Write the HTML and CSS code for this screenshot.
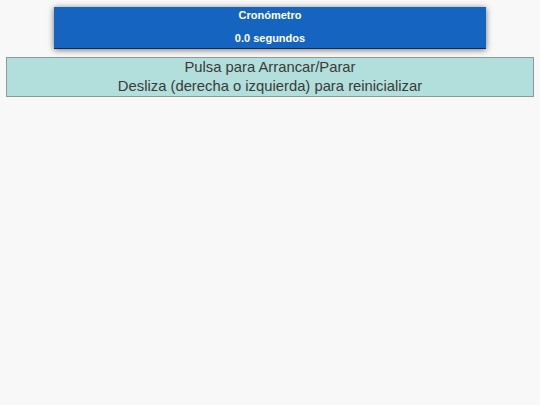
FILE: index.html
```html
<!DOCTYPE html>
<html lang="es">
<head>
<meta charset="utf-8">
<title>Cronómetro</title>
<link rel="stylesheet" href="styles.css">
</head>
<body>
<header class="timer">
  <p class="timer-title">Cronómetro</p>
  <p class="timer-value">0.0 segundos</p>
</header>
<div class="help">
  <p>Pulsa para Arrancar/Parar</p>
  <p>Desliza (derecha o izquierda) para reinicializar</p>
</div>
</body>
</html>
```
FILE: styles.css
```css
html, body {
  margin: 0;
  padding: 0;
  background: #f8f8f8;
  font-family: "Liberation Sans", Arial, sans-serif;
}
.timer {
  width: 432px;
  margin: 7px auto 0;
  box-sizing: border-box;
  background: #1565c0;
  color: #fff;
  border-bottom: 1px solid #0b2d57;
  box-shadow: 0 1px 6px rgba(0,0,0,0.55);
  padding: 0 0 2px;
  text-align: center;
  font-weight: bold;
  font-size: 11px;
}
.timer p {
  margin: 0;
  line-height: 16px;
}
.timer-value {
  margin-top: 7px !important;
}
.help {
  margin: 8px 6px 0;
  background: #b2dfdb;
  border: 1px solid #8a9a98;
  text-align: center;
  color: #3a3a3a;
  font-size: 14.8px;
}
.help p {
  margin: 0;
  line-height: 19px;
}
```
